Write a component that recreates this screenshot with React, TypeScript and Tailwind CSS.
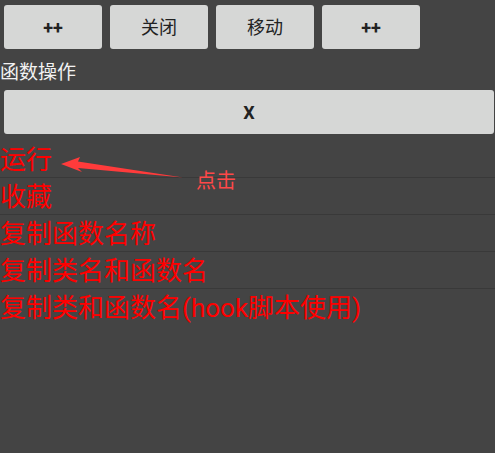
import React from "react";

const TOP_BUTTONS = [
  { label: "++", bold: true },
  { label: "关闭", bold: false },
  { label: "移动", bold: false },
  { label: "++", bold: true },
];

const ACTIONS = [
  "运行",
  "收藏",
  "复制函数名称",
  "复制类名和函数名",
  "复制类和函数名(hook脚本使用)",
];

function App() {
  return (
    <div
      className="relative w-[495px] h-[453px] overflow-hidden bg-[#444444]"
      style={{ fontFamily: 'Roboto, "Noto Sans CJK SC", sans-serif' }}
    >
      <div className="flex gap-2 pt-[5px] pl-[4px]">
        {TOP_BUTTONS.map((b, i) => (
          <button
            key={i}
            className={`w-[98px] h-[44px] rounded-[3px] bg-[#d6d7d6] text-[#222222] text-[18px] ${
              b.bold ? "font-bold" : ""
            }`}
          >
            {b.label}
          </button>
        ))}
      </div>

      <div className="pt-[12px] mb-[5px] text-[19px] leading-[24px] text-[#f2f2f2]">
        函数操作
      </div>

      <button className="block ml-[4px] w-[490px] h-[44px] rounded-[3px] bg-[#d6d7d6] text-[#222222] text-[18px] font-bold">
        X
      </button>

      <div className="mt-[7px] flex flex-col">
        {ACTIONS.map((a, i) => (
          <div
            key={a}
            className={`h-[34px] pt-[2px] text-[26px] leading-[34px] text-[#ff0000] whitespace-nowrap ${
              i < ACTIONS.length - 1 ? "border-b border-[#393939] box-content" : ""
            }`}
          >
            {a}
          </div>
        ))}
      </div>

      {/* annotation arrow */}
      <svg
        className="absolute left-0 top-0 pointer-events-none"
        width="495"
        height="453"
      >
        <polygon
          points="61,164 80,157 78,161.5 183,177.5 78,168 82,172"
          fill="#ff3b3b"
        />
      </svg>
      <div className="absolute left-[196px] top-[168px] text-[20px] leading-[26px] text-[#ff4848]">
        点击
      </div>
    </div>
  );
}

export default App;
